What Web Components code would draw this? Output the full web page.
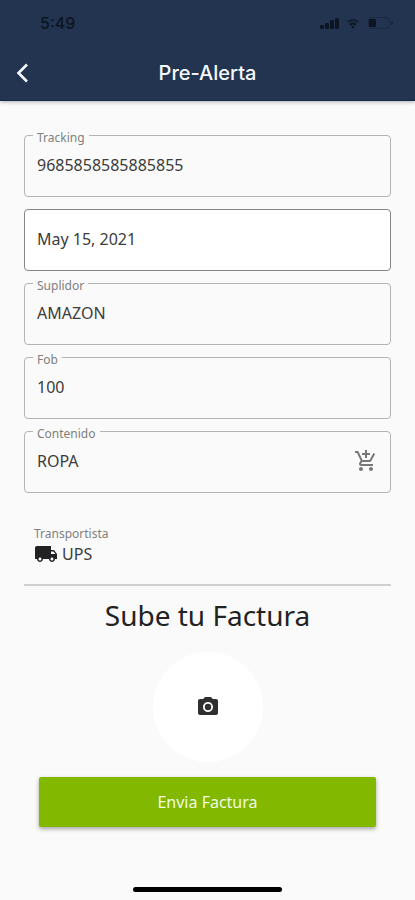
<!DOCTYPE html>
<html lang="es">
<head>
<meta charset="utf-8">
<meta name="viewport" content="width=device-width, initial-scale=1">
<title>Pre-Alerta</title>
<style>
  body {
    margin: 0;
    background: #fafafa;
    color: #3c3c3c;
    font-family: "Noto Sans", sans-serif;
  }
</style>
</head>
<body>
<prealert-screen></prealert-screen>

<script>
const ICONS = {
  back: '<path d="M15 3.500 6.500 12l8.500 8.500" fill="none" stroke="currentColor" stroke-width="2.600"/>',
  cart: '<path d="M11 9h2V6h3V4h-3V1h-2v3H8v2h3v3zm-4 9c-1.1 0-1.99.9-1.99 2S5.9 22 7 22s2-.9 2-2-.9-2-2-2zm10 0c-1.1 0-1.99.9-1.99 2s.89 2 1.99 2 2-.9 2-2-.9-2-2-2zm-9.83-3.25.03-.12.9-1.63h7.45c.75 0 1.41-.41 1.75-1.03l3.86-7.01L19.42 4h-.01l-1.1 2-2.76 5H8.53l-.13-.27L6.16 6l-.95-2-.94-2H1v2h2l3.6 7.59-1.35 2.45c-.16.28-.25.61-.25.96 0 1.1.9 2 2 2h12v-2H7.42c-.13 0-.25-.11-.25-.25z"/>',
  truck: '<path d="M20 8h-3V4H3c-1.1 0-2 .9-2 2v11h2c0 1.66 1.34 3 3 3s3-1.34 3-3h6c0 1.66 1.34 3 3 3s3-1.34 3-3h2v-5l-3-4zM6 18.5c-.83 0-1.5-.67-1.5-1.5s.67-1.5 1.5-1.5 1.5.67 1.5 1.5-.67 1.5-1.5 1.5zm13.5-9 1.96 2.5H17V9.5h2.5zm-1.5 9c-.83 0-1.5-.67-1.5-1.5s.67-1.5 1.5-1.5 1.5.67 1.5 1.5-.67 1.5-1.5 1.5z"/>',
  camera: '<circle cx="12" cy="12" r="3.2"/><path d="M9 2 7.17 4H4c-1.1 0-2 .9-2 2v12c0 1.1.9 2 2 2h16c1.1 0 2-.9 2-2V6c0-1.1-.9-2-2-2h-3.17L15 2H9zm3 15c-2.76 0-5-2.24-5-5s2.24-5 5-5 5 2.24 5 5-2.24 5-5 5z"/>',
}

class AppIcon extends HTMLElement {
  constructor() {
    super()
    this.attachShadow({ mode: 'open' })
  }

  connectedCallback() {
    this.shadowRoot.innerHTML = `
      <style>
        :host { display: block; flex: none; width: 24px; height: 24px; }
        svg { display: block; width: 100%; height: 100%; fill: currentColor; }
      </style>
      <svg viewBox="0 0 24 24" aria-hidden="true">${ICONS[this.getAttribute('name')] || ''}</svg>
    `
  }
}

class StatusBar extends HTMLElement {
  constructor() {
    super()
    this.attachShadow({ mode: 'open' })
    this.shadowRoot.innerHTML = `
      <style>
        :host {
          display: flex;
          justify-content: space-between;
          align-items: center;
          height: 46px;
          padding: 0 20px 0 40px;
          color: #0d1522;
          font: 500 16px/20px Inter, sans-serif;
        }
        svg { display: block; }
      </style>
      <span>5:49</span>
      <svg width="75" height="14" viewBox="0 0 75 14" fill="currentColor" aria-hidden="true">
        <rect x="0" y="9" width="4" height="4" rx="1"/>
        <rect x="5" y="7" width="4" height="6" rx="1"/>
        <rect x="10" y="4" width="4" height="9" rx="1"/>
        <rect x="15" y="2" width="4" height="11" rx="1"/>
        <path d="M27 5.500a8.500 8.500 0 0 1 12 0l-1.400 1.600a6.500 6.500 0 0 0-9.200 0z" opacity=".65"/>
        <path d="M29.200 8a5.400 5.400 0 0 1 7.600 0l-1.500 1.600a3.300 3.300 0 0 0-4.600 0z"/>
        <path d="M31.200 10.600a2.600 2.600 0 0 1 3.600 0L33 12.800z"/>
        <rect x="48.500" y="1.500" width="21" height="11" rx="3" fill="none" stroke="currentColor" opacity=".35"/>
        <rect x="49" y="3" width="7" height="8" rx="1"/>
        <path d="M71 5v4c1.200-.4 2-1.100 2-2s-.8-1.600-2-2z" opacity=".5"/>
      </svg>
    `
  }
}

class AppHeader extends HTMLElement {
  constructor() {
    super()
    this.attachShadow({ mode: 'open' })
    this.shadowRoot.innerHTML = `
      <style>
        :host {
          display: block;
          background: #22344f;
          border-bottom: 1px solid #13294a;
          box-shadow: 0 1px 4px rgba(0, 0, 0, 0.3);
        }
        nav {
          display: grid;
          grid-template-columns: 48px 1fr 48px;
          align-items: center;
          height: 54px;
          color: #f5f8fc;
        }
        button {
          display: grid;
          place-items: center;
          height: 48px;
          padding: 0;
          border: 0;
          background: none;
          color: inherit;
        }
        h1 {
          margin: 0;
          text-align: center;
          font: 500 20px/24px Inter, sans-serif;
        }
      </style>
      <status-bar></status-bar>
      <nav>
        <button type="button" aria-label="Atrás"><app-icon name="back"></app-icon></button>
        <h1><slot></slot></h1>
      </nav>
    `
  }
}

class OutlinedField extends HTMLElement {
  constructor() {
    super()
    this.attachShadow({ mode: 'open' })
  }

  connectedCallback() {
    const label = this.getAttribute('label')
    const value = this.getAttribute('value') || ''

    this.shadowRoot.innerHTML = `
      <style>
        :host {
          display: flex;
          align-items: center;
          position: relative;
          box-sizing: border-box;
          height: 62px;
          padding: 0 12px 2px;
          border: 1px solid #b4b4b4;
          border-radius: 4px;
        }
        :host([filled]) {
          background: #fff;
          border-color: #868686;
        }
        /* sits over the top border and cuts the notch */
        label {
          position: absolute;
          top: -4px;
          left: 8px;
          padding: 0 4px;
          background: #fafafa;
          color: #808080;
          font-size: 12px;
          line-height: 12px;
        }
        input {
          flex: 1;
          min-width: 0;
          padding: 0;
          border: 0;
          outline: 0;
          background: none;
          color: inherit;
          font: inherit;
          font-size: 16px;
          line-height: 24px;
        }
        ::slotted(app-icon) { color: #777; }
      </style>
      ${label ? `<label for="input">${label}</label>` : ''}
      <input id="input" type="text" value="${value}" ${label ? '' : 'aria-label="Fecha"'}>
      <slot></slot>
    `
  }
}

class CarrierSelect extends HTMLElement {
  constructor() {
    super()
    this.attachShadow({ mode: 'open' })
    this.shadowRoot.innerHTML = `
      <style>
        :host {
          display: block;
          padding: 33px 10px 18px;
          border-bottom: 2px solid #cfcfcf;
        }
        label {
          display: block;
          color: #808080;
          font-size: 12px;
          line-height: 16px;
        }
        .row {
          display: flex;
          align-items: center;
          gap: 4px;
        }
        app-icon { color: #222; }
        select {
          flex: 1;
          appearance: none;
          padding: 0;
          border: 0;
          background: none;
          color: inherit;
          font: inherit;
          font-size: 16px;
          line-height: 24px;
        }
      </style>
      <label for="carrier">Transportista</label>
      <div class="row">
        <app-icon name="truck"></app-icon>
        <select id="carrier"><option>UPS</option></select>
      </div>
    `
  }
}

class InvoiceUpload extends HTMLElement {
  constructor() {
    super()
    this.attachShadow({ mode: 'open' })
    this.shadowRoot.innerHTML = `
      <style>
        :host {
          display: flex;
          flex-direction: column;
          align-items: center;
        }
        h2 {
          margin: 0;
          padding: 9px 0 17px;
          color: #222;
          font-weight: 400;
          font-size: 28px;
          line-height: 40px;
        }
        button {
          display: grid;
          place-items: center;
          width: 110px;
          height: 110px;
          padding: 0;
          border: 0;
          border-radius: 50%;
          background: #fff;
          color: #303030;
        }
      </style>
      <h2><slot></slot></h2>
      <button type="button" aria-label="Tomar foto"><app-icon name="camera"></app-icon></button>
    `
  }
}

class SubmitButton extends HTMLElement {
  constructor() {
    super()
    this.attachShadow({ mode: 'open' })
    this.shadowRoot.innerHTML = `
      <style>
        :host { display: block; padding: 15px; }
        button {
          display: block;
          width: 100%;
          height: 50px;
          border: 0;
          border-radius: 2px;
          background: #82b900;
          box-shadow: 0 2px 4px rgba(0, 0, 0, 0.35);
          color: #f3fae0;
          font: inherit;
          font-size: 16px;
        }
      </style>
      <button type="submit"><slot></slot></button>
    `
  }
}

class PrealertScreen extends HTMLElement {
  constructor() {
    super()
    this.attachShadow({ mode: 'open' })
    this.shadowRoot.innerHTML = `
      <style>
        :host {
          display: flex;
          flex-direction: column;
          min-height: 100vh;
        }
        main { padding: 34px 24px 0; }
        .fields { display: grid; gap: 12px; }
        footer {
          display: flex;
          justify-content: center;
          margin-top: auto;
          padding-bottom: 8px;
        }
        .home {
          width: 36%;
          height: 5px;
          border-radius: 3px;
          background: #000;
        }
      </style>
      <app-header>Pre-Alerta</app-header>
      <main>
        <div class="fields">
          <outlined-field label="Tracking" value="9685858585885855"></outlined-field>
          <outlined-field value="May 15, 2021" filled></outlined-field>
          <outlined-field label="Suplidor" value="AMAZON"></outlined-field>
          <outlined-field label="Fob" value="100"></outlined-field>
          <outlined-field label="Contenido" value="ROPA"><app-icon name="cart"></app-icon></outlined-field>
        </div>
        <carrier-select></carrier-select>
        <invoice-upload>Sube tu Factura</invoice-upload>
        <submit-button>Envia Factura</submit-button>
      </main>
      <footer><div class="home"></div></footer>
    `
  }
}

customElements.define('app-icon', AppIcon)
customElements.define('status-bar', StatusBar)
customElements.define('app-header', AppHeader)
customElements.define('outlined-field', OutlinedField)
customElements.define('carrier-select', CarrierSelect)
customElements.define('invoice-upload', InvoiceUpload)
customElements.define('submit-button', SubmitButton)
customElements.define('prealert-screen', PrealertScreen)
</script>
</body>
</html>
